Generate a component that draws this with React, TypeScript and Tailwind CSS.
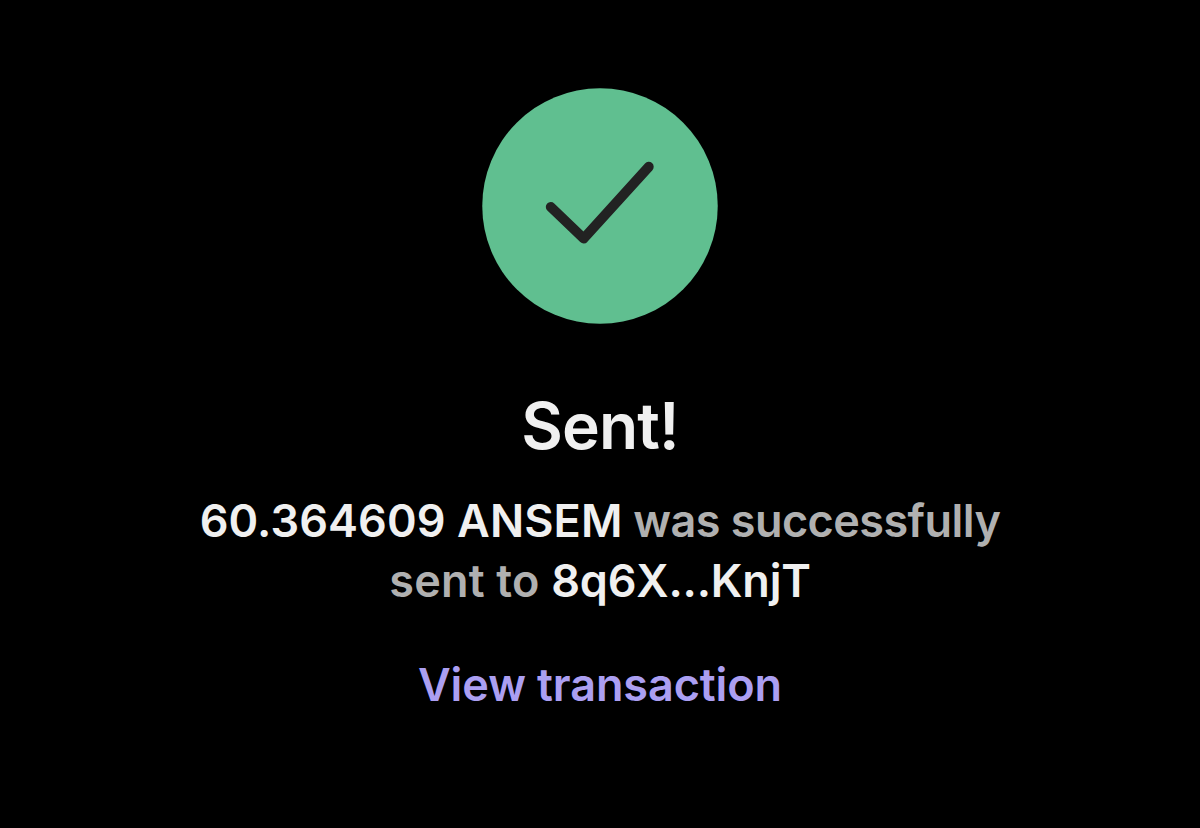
const SuccessIcon = () => {
  return (
    <svg viewBox="0 0 236 236" className="size-59" fill="none">
      <circle cx="118" cy="118" r="117.75" fill="#60bf90" />
      <path
        d="M68.800 119 L101.700 150.500 L166.700 78.800"
        stroke="#222222"
        strokeWidth="10"
        strokeLinecap="round"
        strokeLinejoin="round"
      />
    </svg>
  );
};

const App = () => {
  return (
    <main className="flex h-[828px] w-[1200px] flex-col items-center bg-black pt-[88px] text-center font-['Inter',sans-serif] text-[#f0f0f0]">
      <SuccessIcon />

      {/* TITLE */}
      <h1 className="mt-[62px] text-[64px] leading-20 font-semibold tracking-[-0.9px]">
        Sent!
      </h1>

      {/* MESSAGE */}
      <p className="mt-[25px] text-[45px] leading-[60px] font-semibold whitespace-nowrap text-[#b0b0b0]">
        <span className="block tracking-[-0.55px]">
          <span className="tracking-[0.1px] text-[#f0f0f0]">
            60.364609 ANSEM
          </span>{" "}
          was successfully
        </span>
        <span className="block tracking-[0.2px]">
          sent to{" "}
          <span className="tracking-[-0.2px] text-[#f0f0f0]">8q6X...KnjT</span>
        </span>
      </p>

      {/* LINK */}
      <a
        href="#"
        className="mt-11 text-[45px] leading-[60px] font-semibold tracking-[-0.1px] text-[#ab9ff2]"
      >
        View transaction
      </a>
    </main>
  );
};

export default App;
